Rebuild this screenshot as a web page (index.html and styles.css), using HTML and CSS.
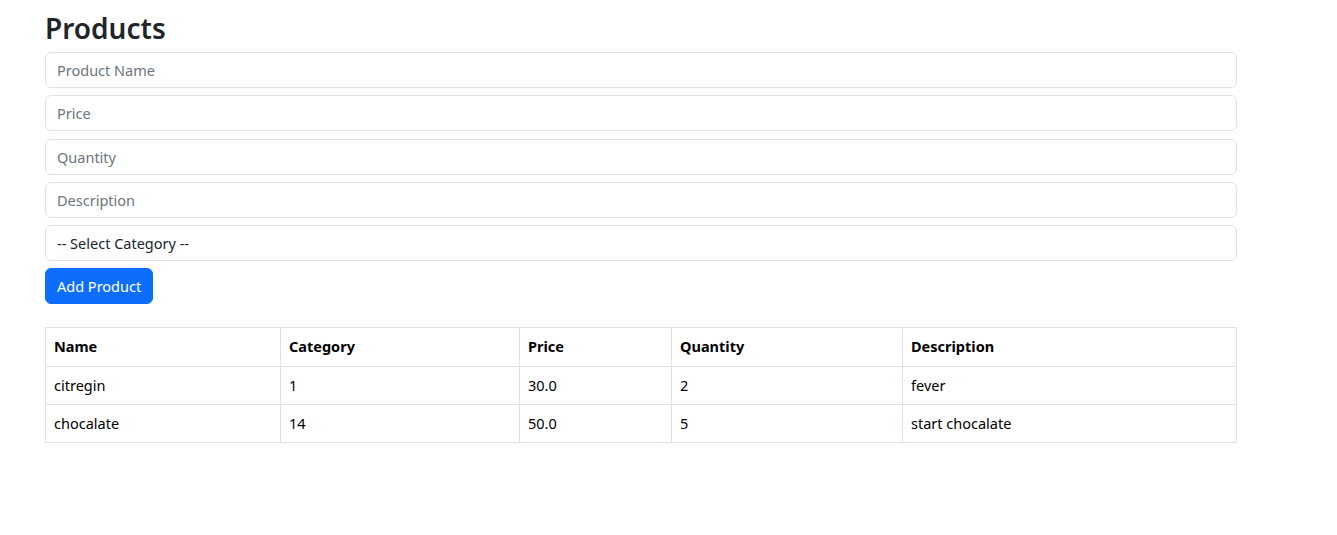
FILE: index.html
```html
<!DOCTYPE html>
<html lang="en">
<head>
<meta charset="utf-8">
<title>Products</title>
<link rel="stylesheet" href="styles.css">
</head>
<body>
<div class="container">
  <h2 class="title">Products</h2>
  <form class="form">
    <input class="field" type="text" placeholder="Product Name">
    <input class="field" type="text" placeholder="Price">
    <input class="field" type="text" placeholder="Quantity">
    <input class="field" type="text" placeholder="Description">
    <select class="field select">
      <option>-- Select Category --</option>
    </select>
    <div><button class="btn" type="button">Add Product</button></div>
  </form>
  <table class="table">
    <colgroup>
      <col class="c-name"><col class="c-cat"><col class="c-price"><col class="c-qty"><col class="c-desc">
    </colgroup>
    <thead>
      <tr><th>Name</th><th>Category</th><th>Price</th><th>Quantity</th><th>Description</th></tr>
    </thead>
    <tbody>
      <tr><td>citregin</td><td>1</td><td>30.0</td><td>2</td><td>fever</td></tr>
      <tr><td>chocalate</td><td>14</td><td>50.0</td><td>5</td><td>start chocalate</td></tr>
    </tbody>
  </table>
</div>
</body>
</html>
```
FILE: styles.css
```css
* { box-sizing: border-box; }
html, body { margin: 0; padding: 0; background: #fff; }
body {
  font-family: "Noto Sans", "Open Sans", sans-serif;
  color: #212529;
  font-size: 14.5px;
}
.container {
  width: 1192px;
  margin-left: 45px;
  padding-top: 9px;
}
.title {
  margin: 0 0 5px 0;
  font-size: 28px;
  line-height: 38px;
  font-weight: 600;
  color: #212529;
}
.form {
  display: flex;
  flex-direction: column;
  gap: 7.3px;
}
.field {
  display: block;
  width: 100%;
  height: 36px;
  padding: 0 11px;
  font-family: inherit;
  font-size: 14.5px;
  color: #212529;
  background: #fff;
  border: 1px solid #dee2e6;
  border-radius: 6px;
  outline: none;
}
.field::placeholder { color: #6c757d; }
.select {
  appearance: none;
  -webkit-appearance: none;
}
.btn {
  height: 36px;
  padding: 0 11px;
  font-family: inherit;
  font-size: 14.5px;
  color: #fff;
  background: #0d6efd;
  border: 1px solid #0d6efd;
  border-radius: 6px;
}
.table {
  margin-top: 23px;
  width: 1191px;
  border-collapse: collapse;
  table-layout: fixed;
  color: #000;
  font-size: 14.5px;
}
.c-name { width: 235px; }
.c-cat { width: 239px; }
.c-price { width: 152px; }
.c-qty { width: 231px; }
.c-desc { width: 334px; }
.table th, .table td {
  border: 1px solid #dee2e6;
  text-align: left;
  padding: 0 8px 2px 8px;
  height: 38px;
}
.table th { font-weight: 700; height: 39px; padding-bottom: 3px; }
```
